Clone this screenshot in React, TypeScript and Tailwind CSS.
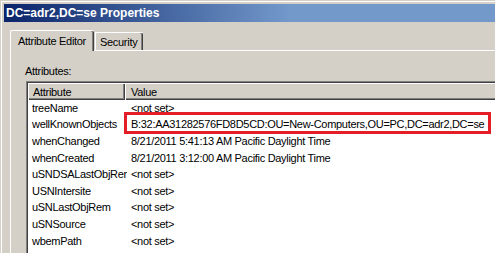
import React from "react";

const rows: [string, string][] = [
  ["treeName", "<not set>"],
  ["wellKnownObjects", "B:32:AA31282576FD8D5CD:OU=New-Computers,OU=PC,DC=adr2,DC=se"],
  ["whenChanged", "8/21/2011 5:41:13 AM Pacific Daylight Time"],
  ["whenCreated", "8/21/2011 3:12:00 AM Pacific Daylight Time"],
  ["uSNDSALastObjRem", "<not set>"],
  ["USNIntersite", "<not set>"],
  ["uSNLastObjRem", "<not set>"],
  ["uSNSource", "<not set>"],
  ["wbemPath", "<not set>"],
];

export default function App() {
  return (
    <div className="relative w-[495px] h-[253px] overflow-hidden bg-[#d4d0c8] font-['Liberation_Sans',Arial,sans-serif] text-[11px] tracking-[-0.3px] text-black">
      <div className="w-[640px] h-[300px] border-l border-t border-[#d4d0c8]">
        <div className="h-full border-l border-t border-white">
          <div className="h-full pl-[2px] pt-[2px]">
            {/* Title bar */}
            <div className="h-[18px] flex items-center pl-[2px] text-white font-bold text-[12px] tracking-normal leading-none bg-[linear-gradient(to_right,#0a246a,#7399cb_45%,#7399cb)]">
              DC=adr2,DC=se Properties
            </div>
            {/* Tabs */}
            <div className="mt-[8px] ml-[6px] h-[20px] flex items-end">
              <div className="relative z-10 -mb-[1px] w-[84px] h-[21px] bg-[#d4d0c8] border-l border-t border-white rounded-tl-[2px] rounded-tr-[2px] shadow-[inset_-1px_0_0_#404040,inset_-2px_0_0_#808080] pl-[7px] pt-[4px] leading-[13px]">
                Attribute Editor
              </div>
              <div className="ml-[1px] w-[48px] h-[18px] bg-[#d4d0c8] border-l border-t border-white rounded-tr-[2px] shadow-[inset_-1px_0_0_#404040,inset_-2px_0_0_#808080] pl-[4px] pt-[3px] leading-[13px]">
                Security
              </div>
            </div>
            {/* Panel */}
            <div className="ml-[6px] h-[260px] border-l border-t border-white">
              <div className="pl-[14px] pt-[14px] leading-[13px]">Attributes:</div>
              <div className="ml-[15px] mt-[3px] w-[600px] h-[200px] bg-white border-l border-t border-[#808080] overflow-hidden">
                <div className="h-full border-l border-t border-[#404040]">
                  <div className="flex h-[17px] bg-[#d4d0c8] leading-[13px]">
                    <div className="w-[97px] h-full pl-[4px] pt-[2px] border-l border-t border-white shadow-[inset_-1px_-1px_0_#404040,inset_-2px_-2px_0_#808080]">
                      Attribute
                    </div>
                    <div className="flex-1 h-full pl-[5px] pt-[2px] border-l border-t border-white shadow-[inset_-1px_-1px_0_#404040,inset_-2px_-2px_0_#808080]">
                      Value
                    </div>
                  </div>
                  {rows.map(([a, v]) => (
                    <div key={a} className="flex items-center h-[16.6px] leading-[13px] whitespace-nowrap">
                      <div className="w-[99px] pl-[4px] overflow-hidden">{a}</div>
                      <div className="pl-[4px]">{v}</div>
                    </div>
                  ))}
                </div>
              </div>
            </div>
          </div>
        </div>
      </div>
      <div className="absolute left-[124px] top-[112px] w-[367px] h-[22px] border-[3px] border-[#e41e26]" />
    </div>
  );
}
